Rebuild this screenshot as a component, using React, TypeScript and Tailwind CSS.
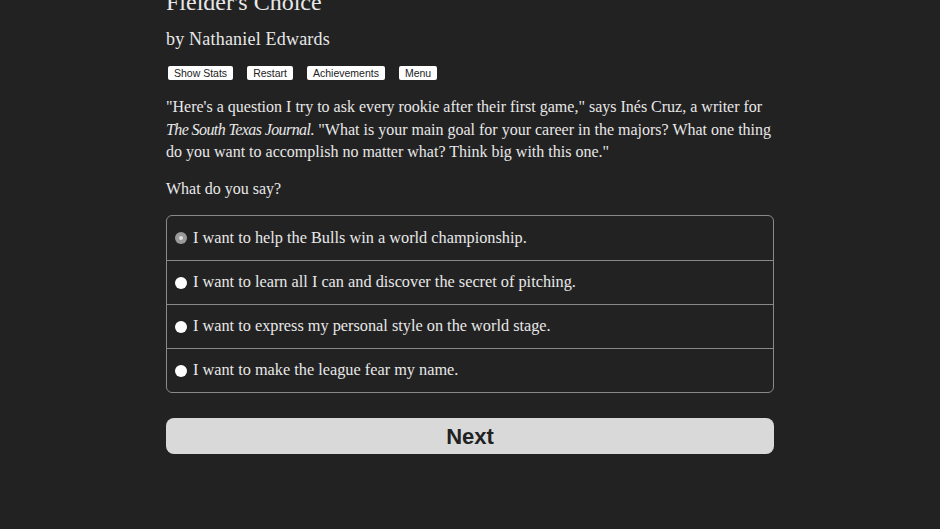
const serif = "font-['Palatino_Linotype','Book_Antiqua','Liberation_Serif',serif]";

const options = [
  "I want to help the Bulls win a world championship.",
  "I want to learn all I can and discover the secret of pitching.",
  "I want to express my personal style on the world stage.",
  "I want to make the league fear my name.",
];

export default function App() {
  return (
    <div className={`h-[529px] w-[940px] overflow-hidden bg-[#222222] text-[#e8e8e8] ${serif}`}>
      <div className="ml-[166px] w-[608px] -mt-[13px]">
        {/* Title */}
        <h1 className="text-[24px] leading-[30px]">Fielder's Choice</h1>
        <h2 className="mt-[10px] text-[18px] leading-[24px] tracking-[0.2px]">by Nathaniel Edwards</h2>

        {/* Buttons */}
        <div className="mt-[15px] flex gap-[14px] pl-[2px] font-['Liberation_Sans',Arial,sans-serif]">
          {["Show Stats", "Restart", "Achievements", "Menu"].map((b) => (
            <button
              key={b}
              className="h-[14px] rounded-[2px] bg-white px-[6px] text-[10.5px] leading-[14px] text-[#222]"
            >
              {b}
            </button>
          ))}
        </div>

        {/* Story text */}
        <p className="mt-[16px] text-[16px] leading-[22.5px]">
          "Here's a question I try to ask every rookie after their first game," says Inés Cruz, a writer for{" "}
          <i className="tracking-[-0.6px]">The South Texas Journal</i>. "What is your main goal for your career in the
          majors? What one thing do you want to accomplish no matter what? Think big with this one."
        </p>
        <p className="mt-[14px] text-[16px] leading-[22.5px]">What do you say?</p>

        {/* Choices */}
        <div className="mt-[15px] rounded-[6px] border border-[#8a8a8a]">
          {options.map((o, i) => (
            <label
              key={o}
              className={`flex h-[44px] items-center gap-[6px] pl-[8px] text-[16.3px] ${
                i > 0 ? "border-t border-[#8a8a8a]" : ""
              }`}
            >
              {i === 0 ? (
                <span className="flex h-[12px] w-[12px] items-center justify-center rounded-full bg-[#9a9a9a]">
                  <span className="h-[4px] w-[4px] rounded-full bg-[#e0e0e0]" />
                </span>
              ) : (
                <span className="h-[12px] w-[12px] rounded-full bg-white" />
              )}
              <span>{o}</span>
            </label>
          ))}
        </div>

        {/* Next */}
        <button className="mt-[25px] h-[36px] w-full rounded-[8px] bg-[#d9d9d9] font-['Liberation_Sans',Arial,sans-serif] text-[22px] font-bold text-[#222]">
          Next
        </button>
      </div>
    </div>
  );
}
